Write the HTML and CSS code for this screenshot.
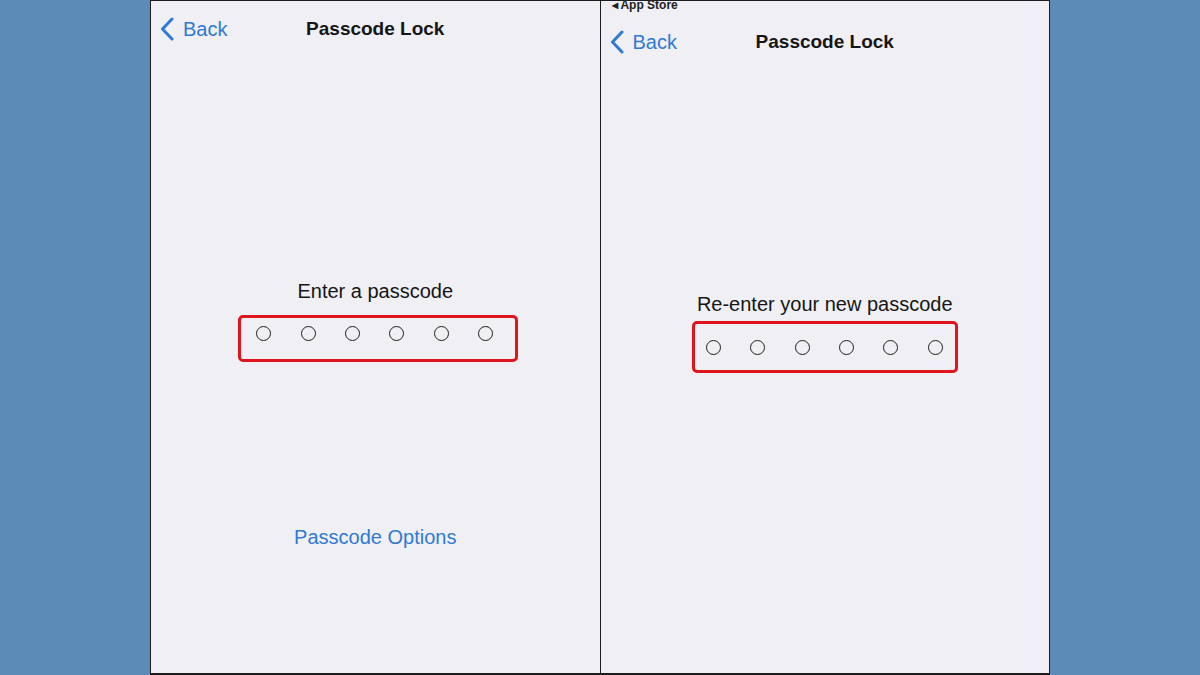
FILE: index.html
```html
<!DOCTYPE html>
<html lang="en">
<head>
    <meta charset="UTF-8">
    <meta name="viewport" content="width=device-width, initial-scale=1.0">
    <title>Passcode Lock</title>
    <link rel="stylesheet" href="styles.css">
</head>
<body>
    <div class="frame">
        <div class="screen screen-left">
            <div class="nav">
                <a class="back" href="#">
                    <svg class="chevron" width="14" height="24" viewBox="0 0 14 24"><path d="M12 2 L2.5 12 L12 22" fill="none" stroke="#2f7ad3" stroke-width="3" stroke-linecap="round" stroke-linejoin="round"/></svg>
                    <span>Back</span>
                </a>
                <div class="title">Passcode Lock</div>
            </div>
            <div class="prompt prompt-left">
                <p class="label">Enter a passcode</p>
                <div class="dots dots-left">
                    <span class="dot"></span>
                    <span class="dot"></span>
                    <span class="dot"></span>
                    <span class="dot"></span>
                    <span class="dot"></span>
                    <span class="dot"></span>
                </div>
            </div>
            <a class="options" href="#">Passcode Options</a>
        </div>

        <div class="screen screen-right">
            <div class="status"><span class="tri">&#9664;</span> App Store</div>
            <div class="nav">
                <a class="back" href="#">
                    <svg class="chevron" width="14" height="24" viewBox="0 0 14 24"><path d="M12 2 L2.5 12 L12 22" fill="none" stroke="#2f7ad3" stroke-width="3" stroke-linecap="round" stroke-linejoin="round"/></svg>
                    <span>Back</span>
                </a>
                <div class="title">Passcode Lock</div>
            </div>
            <div class="prompt prompt-right">
                <p class="label">Re-enter your new passcode</p>
                <div class="dots dots-right">
                    <span class="dot"></span>
                    <span class="dot"></span>
                    <span class="dot"></span>
                    <span class="dot"></span>
                    <span class="dot"></span>
                    <span class="dot"></span>
                </div>
            </div>
        </div>
    </div>
</body>
</html>
```

FILE: styles.css
```css
body {
    margin: 0;
    background: #5a8cb7;
    font-family: "Liberation Sans", Arial, sans-serif;
    color: #161616;
    height: 675px;
    overflow: hidden;
}
.frame {
    width: 900px;
    height: 675px;
    margin: 0 auto;
    box-sizing: border-box;
    border: 1px solid #1c1c1e;
    border-bottom-width: 2px;
    display: flex;
    background: #efeff4;
}
.screen {
    flex: 1;
    display: flex;
    flex-direction: column;
    align-items: center;
}
.screen-left {
    border-right: 1px solid #1c1c1e;
}
.status {
    align-self: flex-start;
    margin: -2px 0 0 11px;
    height: 15px;
    font-size: 12px;
    font-weight: bold;
    line-height: 12px;
    color: #222;
}
.tri {
    font-size: 8px;
    vertical-align: 1px;
}
.nav {
    width: 100%;
    height: 56px;
    display: flex;
    align-items: center;
    justify-content: center;
    position: relative;
}
.back {
    position: absolute;
    left: 9px;
    top: 16px;
    display: flex;
    align-items: center;
    gap: 9px;
    color: #2f7ad3;
    text-decoration: none;
    font-size: 20px;
}
.chevron {
    display: block;
}
.title {
    font-size: 19px;
    font-weight: bold;
}
.prompt {
    display: flex;
    flex-direction: column;
    align-items: center;
    margin-top: 222px;
}
.label {
    margin: 0;
    font-size: 20px;
    line-height: 24px;
}
.dots {
    box-sizing: border-box;
    border: 3px solid #e0141c;
    border-radius: 5px;
    display: flex;
    align-items: center;
    gap: 29.4px;
}
.dots-left {
    width: 280px;
    height: 47px;
    margin-top: 12px;
    margin-left: 6px;
    padding: 0 0 10px 15px;
}
.dots-right {
    width: 266px;
    height: 52px;
    margin-top: 5px;
    padding: 0 0 0 11px;
}
.dot {
    width: 15px;
    height: 15px;
    box-sizing: border-box;
    border: 1.5px solid #1e1e1e;
    border-radius: 50%;
}
.options {
    margin-top: 163px;
    font-size: 20px;
    line-height: 24px;
    color: #2f7ad3;
    text-decoration: none;
}
```
